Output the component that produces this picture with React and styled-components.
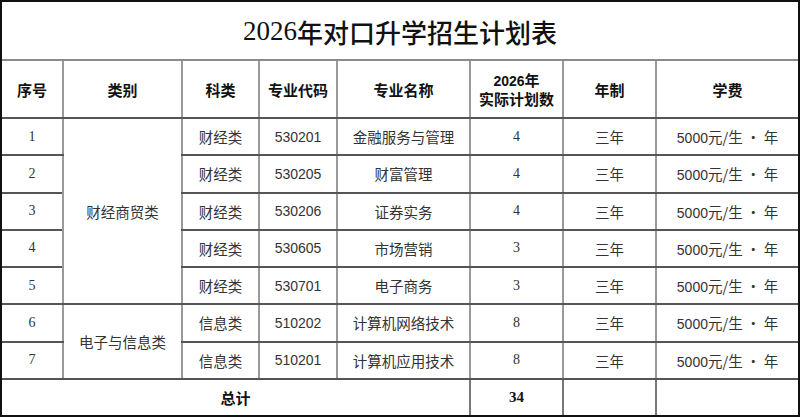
import React from 'react';
import styled, { createGlobalStyle } from 'styled-components';

const GlobalStyle = createGlobalStyle`
  html, body {
    margin: 0;
    padding: 0;
    background: #fff;
  }
`;

const CJK = `"Noto Sans CJK SC", sans-serif`;

const rows = [
  { no: 1, code: '530201', name: '金融服务与管理', count: 4 },
  { no: 2, code: '530205', name: '财富管理', count: 4 },
  { no: 3, code: '530206', name: '证券实务', count: 4 },
  { no: 4, code: '530605', name: '市场营销', count: 3 },
  { no: 5, code: '530701', name: '电子商务', count: 3 },
  { no: 6, code: '510202', name: '计算机网络技术', count: 8, subject: '信息类' },
  { no: 7, code: '510201', name: '计算机应用技术', count: 8, subject: '信息类' },
];

const groups = {
  0: { label: '财经商贸类', span: 5 },
  5: { label: '电子与信息类', span: 2 },
};

const widths = [61, 119, 77, 78, 133, 93, 93];

function App() {
  return (
    <>
      <GlobalStyle />
      <Sheet>
        <Title>
          <TitleNum>2026</TitleNum>年对口升学招生计划表
        </Title>
        <Table>
          <colgroup>
            {widths.map((w, i) => (
              <col key={i} style={{ width: w }} />
            ))}
            <col />
          </colgroup>
          <thead>
            <tr>
              <Head>序号</Head>
              <Head>类别</Head>
              <Head>科类</Head>
              <Head>专业代码</Head>
              <Head>专业名称</Head>
              <Head>
                <HeadNum>2026</HeadNum>年
                <br />
                实际计划数
              </Head>
              <Head>年制</Head>
              <Head>学费</Head>
            </tr>
          </thead>
          <tbody>
            {rows.map((r, i) => (
              <Row key={r.no}>
                <Cell $serif>{r.no}</Cell>
                {groups[i] && <Cell rowSpan={groups[i].span}>{groups[i].label}</Cell>}
                <Cell>{r.subject || '财经类'}</Cell>
                <Cell $num>{r.code}</Cell>
                <Cell>{r.name}</Cell>
                <Cell $serif>{r.count}</Cell>
                <Cell>三年</Cell>
                <Cell>
                  <Num>5000</Num>元/生 · 年
                </Cell>
              </Row>
            ))}
            <TotalRow>
              <TotalCell colSpan={5}>总计</TotalCell>
              <TotalCell $serif>34</TotalCell>
              <TotalCell />
              <TotalCell />
            </TotalRow>
          </tbody>
        </Table>
      </Sheet>
    </>
  );
}

const Sheet = styled.div`
  width: 800px;
  height: 417px;
  box-sizing: border-box;
  border: 2px solid #111;
  display: flex;
  flex-direction: column;
  overflow: hidden;
`;

const Title = styled.div`
  height: 59px;
  flex: none;
  display: flex;
  align-items: center;
  justify-content: center;
  font-family: ${CJK};
  font-size: 26px;
  font-weight: 500;
  color: #111;
  border-bottom: 2px solid #8a8a8a;
  box-sizing: border-box;
  padding-top: 2px;
`;

const TitleNum = styled.span`
  font-family: "Liberation Serif", serif;
  font-size: 27px;
`;

const Table = styled.table`
  width: 100%;
  table-layout: fixed;
  border-collapse: collapse;
  flex: 1;
`;

const Head = styled.th`
  height: 56px;
  padding: 0;
  font-family: ${CJK};
  font-size: 15px;
  font-weight: 700;
  line-height: 17px;
  color: #111;
  text-align: center;
  border-left: 2px solid #9a9a9a;
  border-bottom: 2px solid #555;
  &:first-child {
    border-left: none;
  }
`;

const HeadNum = styled.span`
  font-family: "Liberation Sans", sans-serif;
  font-size: 14px;
`;

const Row = styled.tr`
  height: 37px;
`;

const Cell = styled.td`
  padding: 0;
  text-align: center;
  font-family: ${({ $serif, $num }) =>
    $serif ? '"Liberation Serif", serif' : $num ? '"Liberation Sans", sans-serif' : CJK};
  font-size: ${({ $num, $serif }) => ($num || $serif ? '14px' : '14.5px')};
  color: #333;
  border-left: 2px solid #9a9a9a;
  border-bottom: 2px solid #555;
  &:first-child {
    border-left: none;
  }
`;

const Num = styled.span`
  font-family: "Liberation Sans", sans-serif;
  font-size: 14px;
`;

const TotalRow = styled.tr`
  height: 36px;
`;

const TotalCell = styled.td`
  padding: 0;
  text-align: center;
  font-family: ${({ $serif }) => ($serif ? '"Liberation Serif", serif' : CJK)};
  font-size: 15px;
  font-weight: 700;
  color: #111;
  border-left: 2px solid #777;
  &:first-child {
    border-left: none;
  }
`;

export default App;
